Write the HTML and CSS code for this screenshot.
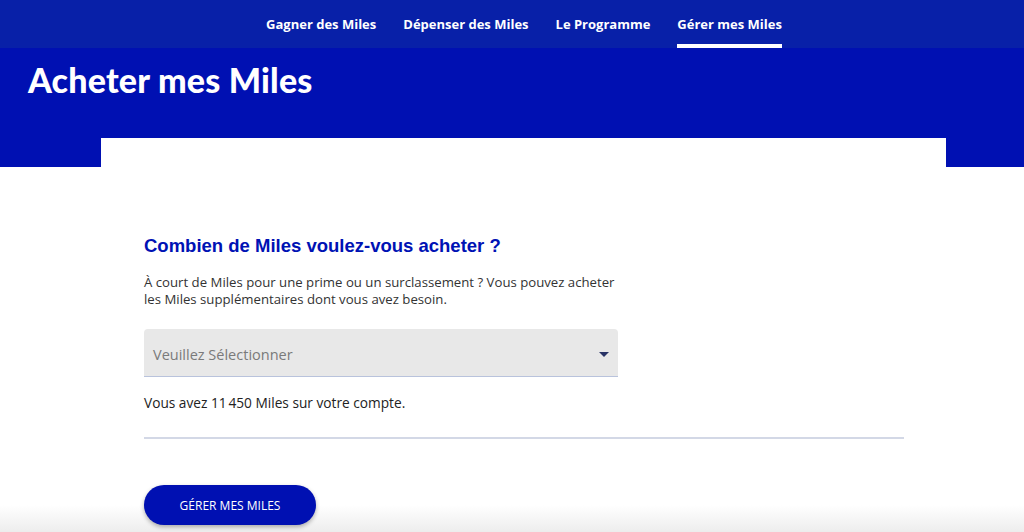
FILE: index.html
```html
<!DOCTYPE html>
<html lang="fr">
<head>
<meta charset="utf-8">
<title>Acheter mes Miles</title>
<link rel="stylesheet" href="styles.css">
</head>
<body>
<nav class="topnav">
  <a class="nav-link">Gagner des Miles</a>
  <a class="nav-link">Dépenser des Miles</a>
  <a class="nav-link">Le Programme</a>
  <a class="nav-link active">Gérer mes Miles</a>
</nav>
<header class="band">
  <h1 class="page-title">Acheter mes Miles</h1>
</header>
<main class="card">
  <h2 class="question">Combien de Miles voulez-vous acheter ?</h2>
  <p class="intro">À court de Miles pour une prime ou un surclassement ? Vous pouvez acheter<br>les Miles supplémentaires dont vous avez besoin.</p>
  <div class="select">
    <span class="placeholder">Veuillez Sélectionner</span>
    <svg class="caret" width="10" height="5" viewBox="0 0 10 5"><path d="M0 0H10L5 5Z" fill="#283366"/></svg>
  </div>
  <p class="balance">Vous avez 11&#8239;450 Miles sur votre compte.</p>
  <hr class="divider">
  <button class="btn">GÉRER MES MILES</button>
</main>
</body>
</html>
```
FILE: styles.css
```css
html {
  background: linear-gradient(to bottom, #ffffff 0, #ffffff 505px, #ededed 532px);
  min-height: 532px;
}
body {
  margin: 0;
  font-family: "Open Sans", "Noto Sans", sans-serif;
  height: 532px;
  overflow: hidden;
}
.topnav {
  height: 48px;
  background: #0820a8;
  display: flex;
  justify-content: center;
  gap: 27px;
  padding-left: 24px;
  box-sizing: border-box;
}
.nav-link {
  color: #fff;
  font-weight: 700;
  font-size: 13px;
  line-height: 48px;
  position: relative;
  cursor: pointer;
}
.nav-link.active::after {
  content: "";
  position: absolute;
  left: 0;
  right: 0;
  bottom: 0;
  height: 4px;
  background: #fff;
}
.band {
  background: #0010b2;
  height: 119px;
  padding: 13px 0 0 28px;
  box-sizing: border-box;
}
.page-title {
  margin: 0;
  color: #fff;
  font-family: "Lato", "Noto Sans", sans-serif;
  font-weight: 900;
  font-size: 34px;
  line-height: 38px;
  letter-spacing: 0.2px;
}
.card {
  background: linear-gradient(#fff, #fff) no-repeat top / 100% 200px;
  margin: -29px 78px 0 101px;
  position: relative;
  padding: 97px 42px 0 43px;
  height: 394px;
  box-sizing: border-box;
}
.question {
  margin: 0;
  color: #0012b4;
  font-family: "Liberation Sans", Arial, sans-serif;
  font-weight: 700;
  font-size: 18.5px;
  line-height: 22px;
}
.intro {
  margin: 17px 0 0;
  font-size: 13.2px;
  line-height: 17px;
  color: #333;
}
.select {
  margin-top: 21px;
  width: 474px;
  height: 48px;
  background: #e8e8e8;
  border-radius: 4px 4px 0 0;
  border-bottom: 1px solid #b9c3dc;
  display: flex;
  align-items: center;
  justify-content: space-between;
  padding: 3px 9px 0 9px;
  box-sizing: border-box;
}
.placeholder {
  color: #7a7a7a;
  font-size: 14.5px;
}
.caret {
  display: block;
  margin-top: 0;
}
.balance {
  margin: 17px 0 0;
  font-size: 13.7px;
  line-height: 17px;
  color: #222;
}
.divider {
  margin: 26px 0 0;
  border: 0;
  height: 2px;
  background: #d3d8e6;
}
.btn {
  margin-top: 46px;
  width: 172px;
  height: 40px;
  border: 0;
  border-radius: 20px;
  background: #0010b2;
  color: #fff;
  font-family: "Open Sans", "Noto Sans", sans-serif;
  font-size: 12px;
  box-shadow: 0 2px 4px rgba(0, 0, 0, 0.3);
  cursor: pointer;
}
```
